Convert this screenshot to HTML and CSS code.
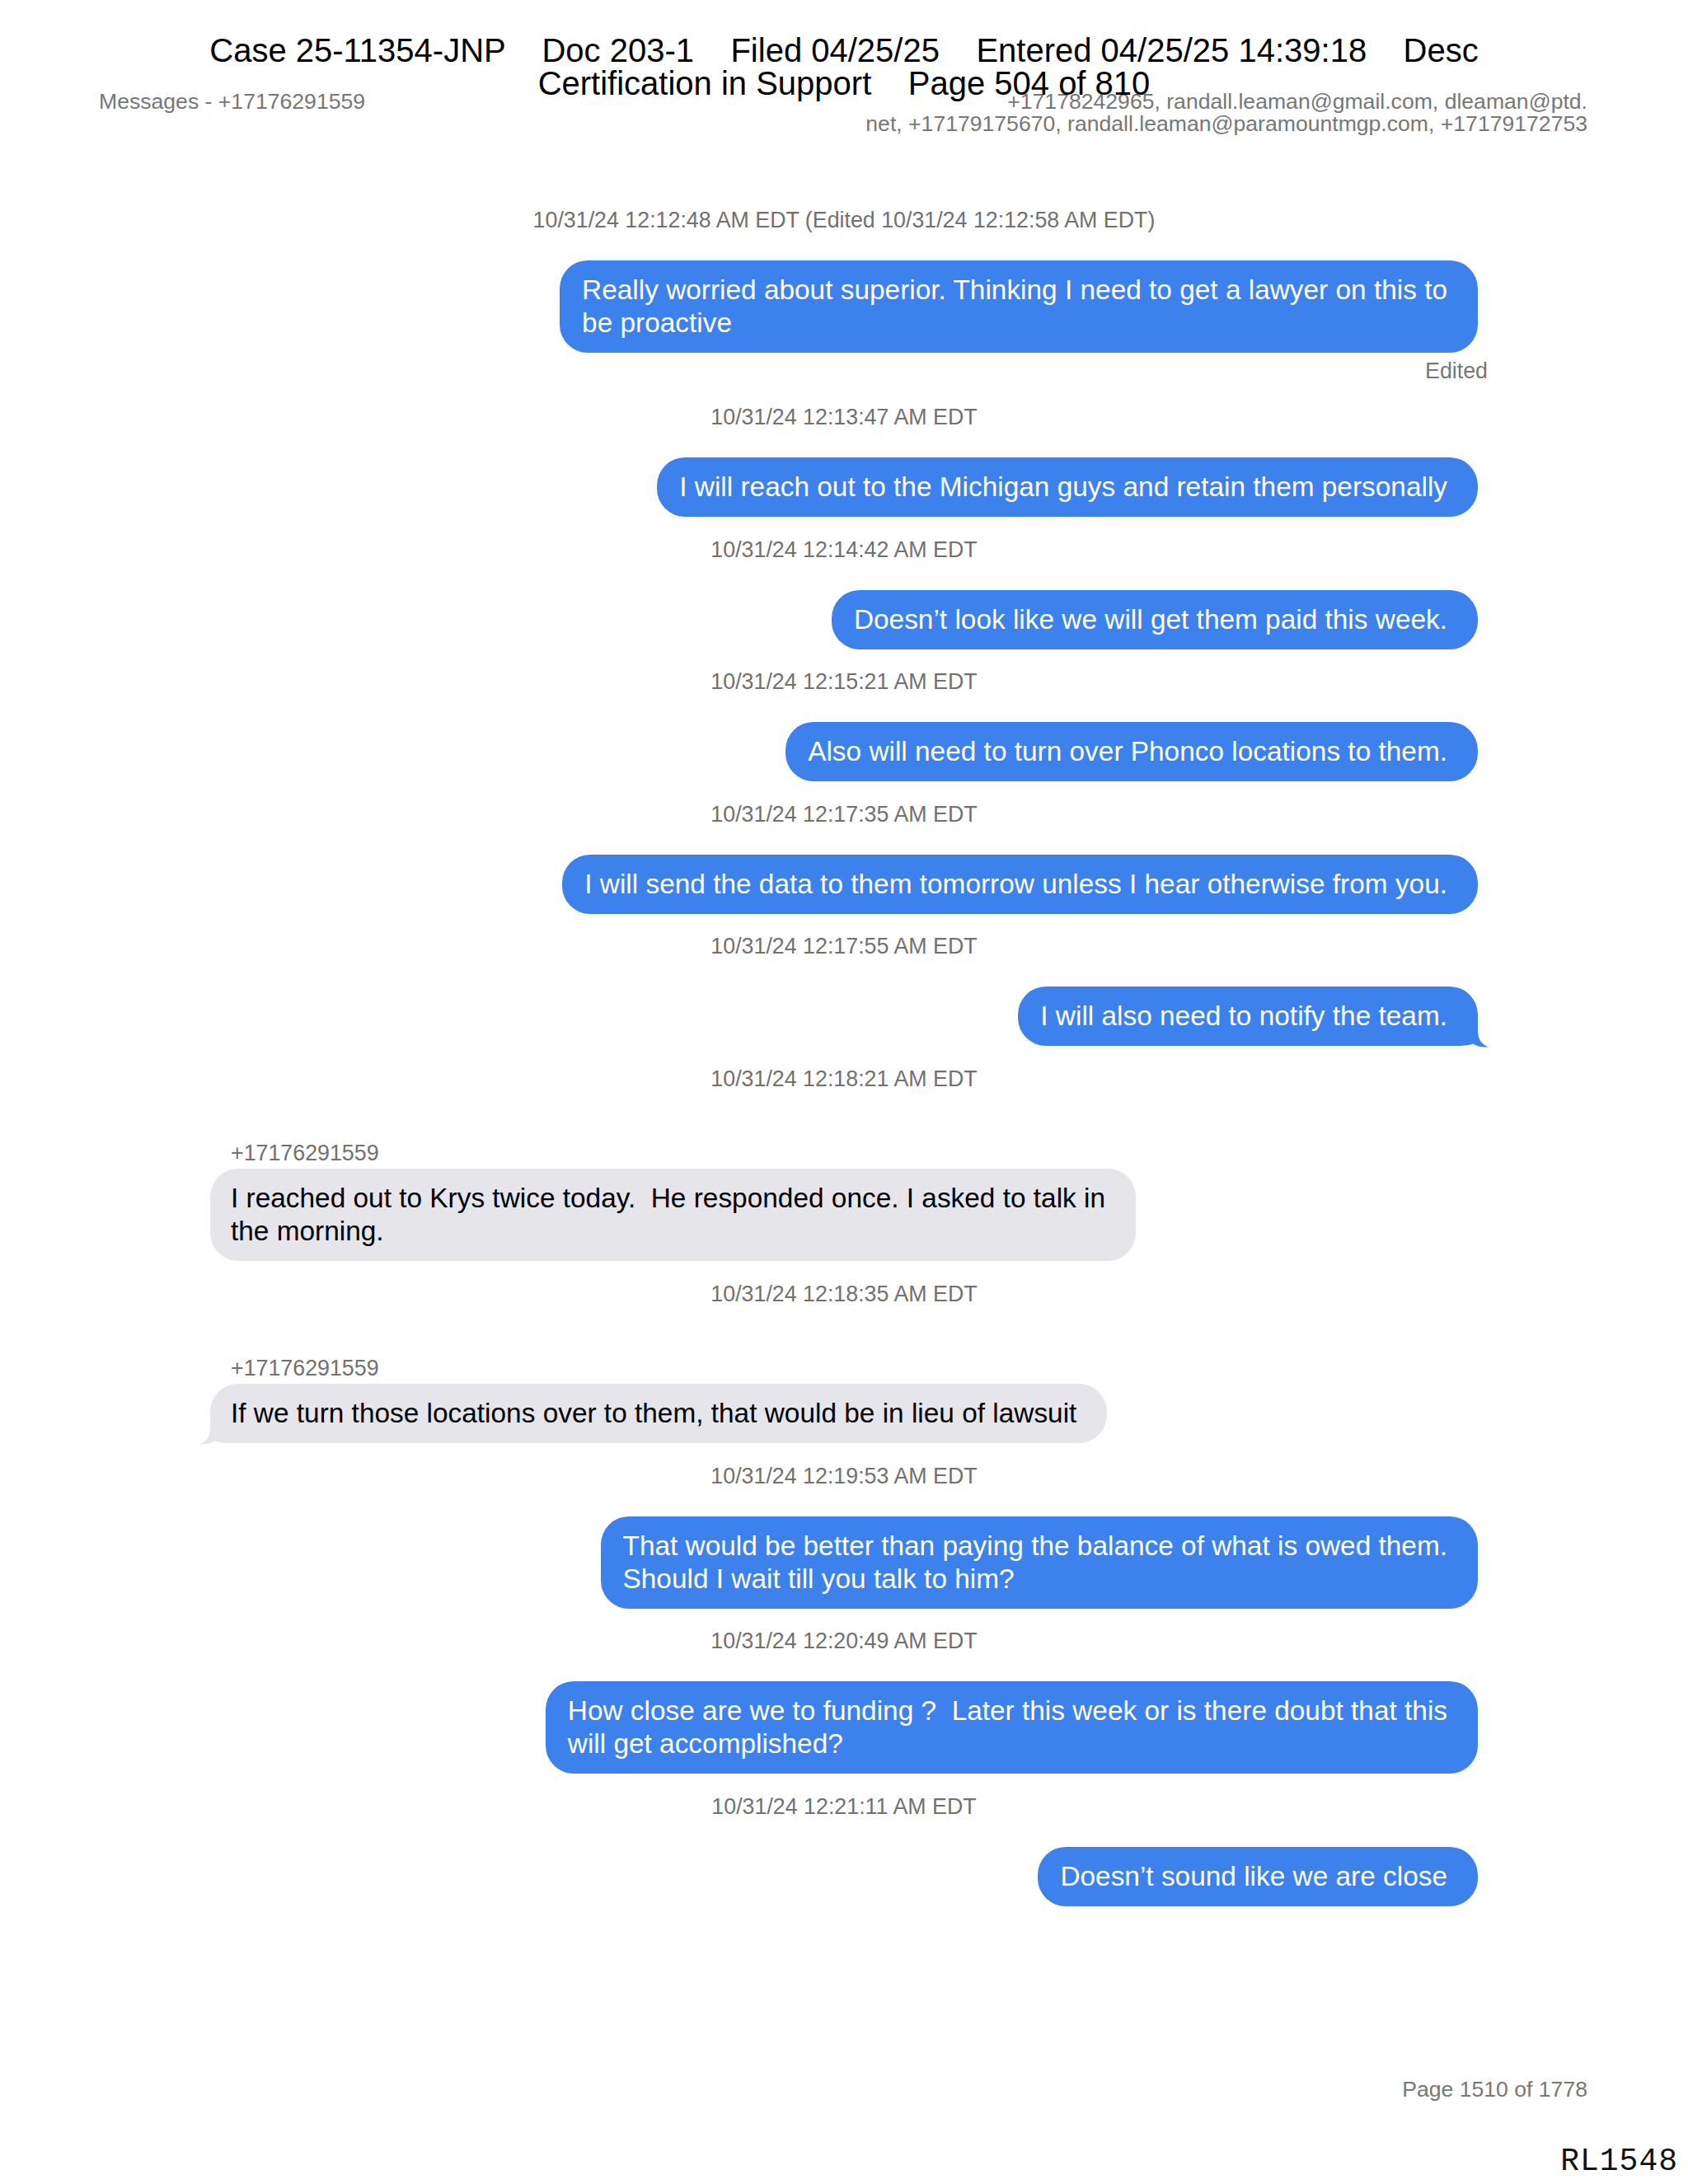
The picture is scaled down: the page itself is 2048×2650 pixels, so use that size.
FILE: index.html
```html
<!DOCTYPE html>
<html lang="en">
<head>
<meta charset="utf-8">
<title>Messages - +17176291559</title>
<link rel="stylesheet" href="styles.css">
</head>
<body>
<div class="page">
  <header class="page-head">
    <div class="conv-title">Messages - +17176291559</div>
    <div class="participants">+17178242965, randall.leaman@gmail.com, dleaman@ptd.<br>net, +17179175670, randall.leaman@paramountmgp.com, +17179172753</div>
  </header>

  <main class="thread">
    <div class="ts ts-first">10/31/24 12:12:48 AM EDT (Edited 10/31/24 12:12:58 AM EDT)</div>
    <div class="bubble out"><span class="txt">Really worried about superior. Thinking I need to get a lawyer on this to<br>be proactive</span></div>
    <div class="edited">Edited</div>

    <div class="ts">10/31/24 12:13:47 AM EDT</div>
    <div class="bubble out"><span class="txt">I will reach out to the Michigan guys and retain them personally</span></div>

    <div class="ts">10/31/24 12:14:42 AM EDT</div>
    <div class="bubble out"><span class="txt">Doesn’t look like we will get them paid this week.</span></div>

    <div class="ts">10/31/24 12:15:21 AM EDT</div>
    <div class="bubble out"><span class="txt">Also will need to turn over Phonco locations to them.</span></div>

    <div class="ts">10/31/24 12:17:35 AM EDT</div>
    <div class="bubble out"><span class="txt">I will send the data to them tomorrow unless I hear otherwise from you.</span></div>

    <div class="ts">10/31/24 12:17:55 AM EDT</div>
    <div class="bubble out"><svg class="tail" viewBox="0 0 46 34" width="46" height="34" aria-hidden="true"><path d="M0 0 H33 V12 C33 24 37 30 46 33.5 C38 34 31 32 27 29.5 C22 31.5 16 32 8 32 H0 Z"/></svg><span class="txt">I will also need to notify the team.</span></div>

    <div class="ts">10/31/24 12:18:21 AM EDT</div>
    <div class="sender">+17176291559</div>
    <div class="bubble in"><span class="txt">I reached out to Krys twice today.&nbsp; He responded once. I asked to talk in<br>the morning.</span></div>

    <div class="ts">10/31/24 12:18:35 AM EDT</div>
    <div class="sender">+17176291559</div>
    <div class="bubble in"><svg class="tail" viewBox="0 0 46 34" width="46" height="34" aria-hidden="true"><path d="M0 0 H33 V12 C33 24 37 30 46 33.5 C38 34 31 32 27 29.5 C22 31.5 16 32 8 32 H0 Z"/></svg><span class="txt">If we turn those locations over to them, that would be in lieu of lawsuit</span></div>

    <div class="ts">10/31/24 12:19:53 AM EDT</div>
    <div class="bubble out"><span class="txt">That would be better than paying the balance of what is owed them.<br>Should I wait till you talk to him?</span></div>

    <div class="ts">10/31/24 12:20:49 AM EDT</div>
    <div class="bubble out"><span class="txt">How close are we to funding ?&nbsp; Later this week or is there doubt that this<br>will get accomplished?</span></div>

    <div class="ts">10/31/24 12:21:11 AM EDT</div>
    <div class="bubble out"><span class="txt">Doesn’t sound like we are close</span></div>
  </main>

  <footer class="page-foot">Page 1510 of 1778</footer>
  <div class="bates">RL1548</div>
</div>

<div class="stamp"><div class="stamp-line">Case 25-11354-JNP    Doc 203-1    Filed 04/25/25    Entered 04/25/25 14:39:18    Desc</div><div class="stamp-line">Certification in Support    Page 504 of 810</div></div>
</body>
</html>
```

FILE: styles.css
```css
* { box-sizing: border-box; }

html, body {
  margin: 0;
  padding: 0;
  background: #ffffff;
}

body {
  font-family: "Liberation Sans", Arial, Helvetica, sans-serif;
  color: #000;
  width: 2048px;
}

.page {
  position: relative;
  width: 2048px;
  display: flex;
  flex-direction: column;
}

/* ---------- conversation header ---------- */
.page-head {
  display: flex;
  justify-content: space-between;
  align-items: flex-start;
  padding: 110px 122px 0 120px;
  font-size: 26.6px;
  line-height: 27px;
  color: #777777;
}

.participants {
  text-align: right;
}

/* ---------- thread ---------- */
.thread {
  display: flex;
  flex-direction: column;
  padding: 0 255px;
}

.ts {
  align-self: center;
  font-size: 26.8px;
  line-height: 28px;
  color: #717171;
  margin-top: 25.5px;
  white-space: nowrap;
}

.ts-first {
  margin-top: 89px;
}

.bubble {
  position: relative;
  margin-top: 35px;
  padding: 16px 37px 16px 27px;
  border-radius: 34px;
  font-size: 33.4px;
  line-height: 40px;
  white-space: nowrap;
}

.txt {
  position: relative;
}

.bubble.out {
  align-self: flex-end;
  background: #3d81ec;
  color: #ffffff;
}

.bubble.in {
  align-self: flex-start;
  background: #e5e5ea;
  color: #000000;
  padding-left: 25px;
}

.tail {
  position: absolute;
  bottom: -2px;
  width: 46px;
  height: 34px;
}

.out .tail {
  right: -13px;
  fill: #3d81ec;
}

.in .tail {
  left: -13px;
  fill: #e5e5ea;
  transform: scaleX(-1);
}

.edited {
  align-self: flex-end;
  margin-top: 8px;
  margin-right: -12px;
  font-size: 26.8px;
  line-height: 28px;
  color: #777777;
}

.edited + .ts {
  margin-top: 28px;
}

.sender {
  align-self: flex-start;
  margin-top: 62.5px;
  padding-left: 25px;
  font-size: 26.8px;
  line-height: 28px;
  color: #717171;
}

.sender + .bubble {
  margin-top: 5px;
}

/* ---------- footer ---------- */
.page-foot {
  margin-top: 208px;
  padding-right: 122px;
  text-align: right;
  font-size: 26.6px;
  line-height: 28px;
  color: #777777;
}

.bates {
  margin-top: 54px;
  padding-right: 12px;
  text-align: right;
  font-family: "Liberation Mono", "Courier New", monospace;
  font-size: 38px;
  line-height: 40px;
  letter-spacing: 1px;
  color: #111111;
}

/* ---------- court filing stamp (overlay) ---------- */
.stamp {
  position: absolute;
  top: 41px;
  left: 0;
  width: 2048px;
  text-align: center;
  font-size: 40px;
  line-height: 40px;
  color: #000;
}

.stamp-line {
  white-space: pre;
}
```
